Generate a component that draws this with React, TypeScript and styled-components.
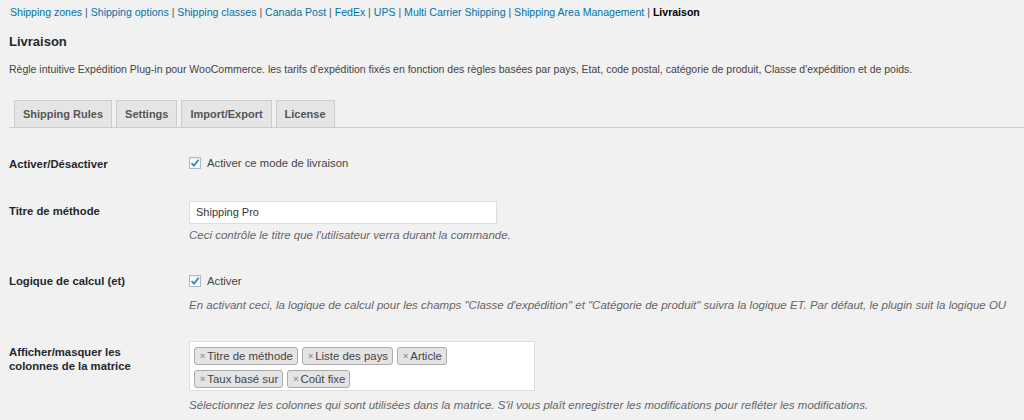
import React from 'react'
import styled, { createGlobalStyle } from 'styled-components'

// constants
const LINKS = [
  'Shipping zones',
  'Shipping options',
  'Shipping classes',
  'Canada Post',
  'FedEx',
  'UPS',
  'Multi Carrier Shipping',
  'Shipping Area Management',
]
const TABS = ['Shipping Rules', 'Settings', 'Import/Export', 'License']
const COLUMN_TAGS = [
  ['Titre de méthode', 'Liste des pays', 'Article'],
  ['Taux basé sur', 'Coût fixe'],
]

const GlobalStyle = createGlobalStyle`
  body {
    margin: 0;
    background: #f1f1f1;
    font-family: "Liberation Sans", Arial, sans-serif;
    font-size: 10.5px;
    color: #444;
  }
`

// styled components
const Page = styled.div`
  width: 1024px;
  height: 420px;
  overflow: hidden;
  padding: 6px 0 0 9px;
  box-sizing: border-box;
`

const SubNav = styled.ul`
  display: flex;
  margin: 0;
  padding: 0 0 0 1px;
  list-style: none;
  font-size: 10.55px;
  line-height: 13px;
  color: #555;
`

const SubNavItem = styled.li`
  white-space: pre;
`

const SubNavLink = styled.a<{ $current?: boolean }>`
  color: ${({ $current }) => ($current ? '#000' : '#0073aa')};
  font-weight: ${({ $current }) => ($current ? 700 : 400)};
  text-decoration: none;
`

const Title = styled.h2`
  margin: 14px 0 0;
  font-size: 13px;
  line-height: 18px;
  font-weight: 700;
  color: #23282d;
`

const Intro = styled.p`
  margin: 11px 0 0;
  line-height: 14px;
`

const TabBar = styled.nav`
  display: flex;
  gap: 4px;
  margin-top: 24px;
  padding-left: 5px;
  border-bottom: 1px solid #ccc;
`

const Tab = styled.a`
  display: block;
  height: 26px;
  padding: 0 8px;
  margin-bottom: -1px;
  line-height: 27px;
  font-size: 11px;
  font-weight: 700;
  color: #555;
  background: #e5e5e5;
  border: 1px solid #ccc;
  text-decoration: none;
`

const FormTable = styled.div`
  display: flex;
  flex-direction: column;
`

const Row = styled.div<{ $top: number }>`
  display: grid;
  grid-template-columns: 180px 1fr;
  padding-top: ${({ $top }) => $top}px;
`

const Label = styled.div<{ $offset: number }>`
  padding-top: ${({ $offset }) => $offset}px;
  font-weight: 700;
  font-size: 11.3px;
  line-height: 14px;
  color: #23282d;
`

const Field = styled.div`
  display: flex;
  flex-direction: column;
`

const CheckLabel = styled.label`
  display: flex;
  align-items: center;
  gap: 6px;
  font-size: 11.3px;
  line-height: 14px;
  color: #444;
`

const CheckBox = styled.span`
  display: flex;
  align-items: center;
  justify-content: center;
  width: 12px;
  height: 12px;
  box-sizing: border-box;
  background: #fff;
  border: 1px solid #b4b9be;
  box-shadow: inset 0 1px 2px rgba(0, 0, 0, 0.1);
`

const TextInput = styled.div`
  width: 308px;
  height: 23px;
  box-sizing: border-box;
  padding: 0 6px;
  font-size: 11px;
  line-height: 21px;
  background: #fff;
  border: 1px solid #ddd;
  color: #32373c;
`

const Description = styled.p<{ $top: number }>`
  margin: ${({ $top }) => $top}px 0 0;
  font-size: 11.5px;
  line-height: 14px;
  font-style: italic;
  color: #666;
`

const TagBox = styled.div`
  width: 346px;
  height: 50px;
  box-sizing: border-box;
  padding: 5px 4px;
  display: flex;
  flex-direction: column;
  gap: 5px;
  background: #fff;
  border: 1px solid #ddd;
`

const TagRow = styled.div`
  display: flex;
  gap: 4px;
`

const Tag = styled.span`
  display: flex;
  align-items: center;
  height: 18px;
  box-sizing: border-box;
  padding: 0 4px 0 5px;
  background: #e4e4e4;
  border: 1px solid #aaa;
  border-radius: 3px;
  font-size: 11.4px;
  color: #444;
`

const TagRemove = styled.span`
  margin-right: 2px;
  font-size: 9px;
  font-weight: 700;
  color: #999;
`

const Check = () => (
  <CheckBox>
    <svg width="10" height="10" viewBox="0 0 10 10">
      <path d="M1.5 5.2 L4 7.6 L8.6 1.8" fill="none" stroke="#1e8cbe" strokeWidth="1.8" />
    </svg>
  </CheckBox>
)

const App = () => (
  <Page>
    <GlobalStyle />
    <SubNav>
      {LINKS.map(link => (
        <SubNavItem key={link}>
          <SubNavLink href="#">{link}</SubNavLink>
          {' | '}
        </SubNavItem>
      ))}
      <SubNavItem>
        <SubNavLink $current>Livraison</SubNavLink>
      </SubNavItem>
    </SubNav>

    <Title>Livraison</Title>
    <Intro>
      Règle intuitive Expédition Plug-in pour WooCommerce. les tarifs d'expédition fixés en
      fonction des règles basées par pays, Etat, code postal, catégorie de produit, Classe
      d'expédition et de poids.
    </Intro>

    <TabBar>
      {TABS.map(tab => (
        <Tab key={tab} href="#">
          {tab}
        </Tab>
      ))}
    </TabBar>

    <FormTable>
      <Row $top={28}>
        <Label $offset={1}>Activer/Désactiver</Label>
        <Field>
          <CheckLabel>
            <Check />
            Activer ce mode de livraison
          </CheckLabel>
        </Field>
      </Row>

      <Row $top={30}>
        <Label $offset={3}>Titre de méthode</Label>
        <Field>
          <TextInput>Shipping Pro</TextInput>
          <Description $top={4}>
            Ceci contrôle le titre que l'utilisateur verra durant la commande.
          </Description>
        </Field>
      </Row>

      <Row $top={32}>
        <Label $offset={0}>Logique de calcul (et)</Label>
        <Field>
          <CheckLabel>
            <Check />
            Activer
          </CheckLabel>
          <Description $top={10}>
            En activant ceci, la logique de calcul pour les champs "Classe d'expédition" et
            "Catégorie de produit" suivra la logique ET. Par défaut, le plugin suit la logique OU
          </Description>
        </Field>
      </Row>

      <Row $top={29}>
        <Label $offset={4}>
          Afficher/masquer les
          <br />
          colonnes de la matrice
        </Label>
        <Field>
          <TagBox>
            {COLUMN_TAGS.map((row, i) => (
              <TagRow key={i}>
                {row.map(tag => (
                  <Tag key={tag}>
                    <TagRemove>×</TagRemove>
                    {tag}
                  </Tag>
                ))}
              </TagRow>
            ))}
          </TagBox>
          <Description $top={7}>
            Sélectionnez les colonnes qui sont utilisées dans la matrice. S'il vous plaît
            enregistrer les modifications pour refléter les modifications.
          </Description>
        </Field>
      </Row>
    </FormTable>
  </Page>
)

export default App
